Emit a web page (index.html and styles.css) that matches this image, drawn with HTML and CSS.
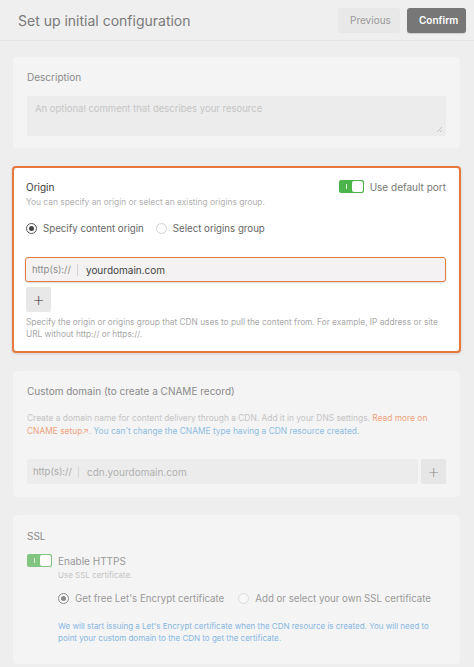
FILE: index.html
```html
<!DOCTYPE html>
<html lang="en">
<head>
<meta charset="utf-8">
<title>Set up initial configuration</title>
<link rel="stylesheet" href="styles.css">
</head>
<body>
<header class="topbar">
  <h1 class="title">Set up initial configuration</h1>
  <div class="actions">
    <button class="btn btn-prev">Previous</button>
    <button class="btn btn-confirm">Confirm</button>
  </div>
</header>
<main class="content">
  <section class="card dim desc-card">
    <div class="label">Description</div>
    <div class="textarea">
      <span class="placeholder">An optional comment that describes your resource</span>
      <svg class="grip" width="8" height="8" viewBox="0 0 8 8"><path d="M7 2 L2 7 M7 5 L5 7" stroke="#c4c4c4" stroke-width="1" fill="none"/></svg>
    </div>
  </section>

  <section class="card active origin-card">
    <div class="row-between">
      <div class="label dark">Origin</div>
      <div class="toggle-wrap">
        <span class="toggle on"><span class="knob"></span></span>
        <span class="toggle-label">Use default port</span>
      </div>
    </div>
    <div class="sub">You can specify an origin or select an existing origins group.</div>
    <div class="radios">
      <label class="radio"><span class="dot checked"></span>Specify content origin</label>
      <label class="radio"><span class="dot"></span>Select origins group</label>
    </div>
    <div class="field focus">
      <span class="prefix">http(s)://</span>
      <span class="value">yourdomain.com</span>
    </div>
    <button class="plus">+</button>
    <p class="help">Specify the origin or origins group that CDN uses to pull the content from. For example, IP address or site URL without http:// or https://.</p>
  </section>

  <section class="card dim domain-card">
    <div class="label">Custom domain (to create a CNAME record)</div>
    <p class="info">Create a domain name for content delivery through a CDN. Add it in your DNS settings. <span class="link">Read more on</span> <span class="link">CNAME setup&#8599;</span>. <span class="blue">You can't change the CNAME type having a CDN resource created.</span></p>
    <div class="field-row">
      <div class="field">
        <span class="prefix">http(s)://</span>
        <span class="value light">cdn.yourdomain.com</span>
      </div>
      <button class="plus small">+</button>
    </div>
  </section>

  <section class="card dim ssl-card">
    <div class="label">SSL</div>
    <div class="ssl-toggle">
      <span class="toggle on faded"><span class="knob"></span></span>
      <div class="ssl-body">
        <div class="ssl-title">Enable HTTPS</div>
        <div class="ssl-sub">Use SSL certificate.</div>
        <div class="radios ssl-radios">
          <label class="radio faded"><span class="dot checked"></span>Get free Let's Encrypt certificate</label>
          <label class="radio faded"><span class="dot"></span>Add or select your own SSL certificate</label>
        </div>
        <p class="blue-note">We will start issuing a Let's Encrypt certificate when the CDN resource is created. You will need to point your custom domain to the CDN to get the certificate.</p>
      </div>
    </div>
  </section>
</main>
</body>
</html>
```

FILE: styles.css
```css
* { box-sizing: border-box; }
html, body { margin: 0; padding: 0; }
body {
  background: #eeeeee;
  font-family: Inter, "Noto Sans", "Liberation Sans", sans-serif;
  color: #666;
  width: 474px;
  height: 667px;
  overflow: hidden;
}
.topbar {
  height: 41px;
  display: flex;
  align-items: center;
  justify-content: space-between;
  padding: 0 8px 0 18px;
  background: #efefef;
  border-bottom: 1px solid #e3e3e3;
}
.title {
  margin: 0;
  font-size: 14px;
  font-weight: 400;
  color: #7a7a7a;
}
.actions { display: flex; gap: 7px; }
.btn {
  font-family: inherit;
  font-size: 10px;
  height: 25px;
  border: none;
  border-radius: 3px;
  padding: 0 12px;
}
.btn-prev { background: #e8e8e8; color: #9a9a9a; width: 62px; }
.btn-confirm { background: #777777; color: #fff; font-weight: 600; width: 59px; box-shadow: 0 1px 1px rgba(0,0,0,0.15); }

.content {
  padding: 16px 14px 0 13px;
  display: flex;
  flex-direction: column;
  gap: 18px;
}
.card {
  border-radius: 4px;
  padding: 14px 14px;
}
.dim { background: #f4f4f4; }
.active {
  background: #ffffff;
  border: 2px solid #e8783a;
  margin: 0 -1px;
  padding: 12px 13px 11px 12px;
  box-shadow: 0 1px 3px rgba(0,0,0,0.12);
}
.label {
  font-size: 10px;
  color: #8a8a8a;
  line-height: 12px;
}
.label.dark { color: #3a3a3a; }

.desc-card { padding-top: 14px; padding-bottom: 12px; }
.textarea {
  position: relative;
  margin-top: 13px;
  height: 40px;
  background: #ececec;
  border-radius: 2px;
  padding: 7px 8px;
  font-size: 9.5px;
  line-height: 12px;
}
.placeholder { color: #c6c6c6; }
.grip { position: absolute; right: 3px; bottom: 3px; }

.row-between { display: flex; justify-content: space-between; align-items: center; }
.toggle-wrap { display: flex; align-items: center; gap: 6px; }
.toggle {
  position: relative;
  display: inline-block;
  width: 25px;
  height: 13px;
  border-radius: 2px;
  background: #4cb44a;
}
.toggle::before {
  content: "";
  position: absolute;
  left: 7px;
  top: 4px;
  width: 1px;
  height: 5px;
  background: rgba(255,255,255,0.8);
}
.toggle .knob {
  position: absolute;
  right: 1px;
  top: 1px;
  width: 11px;
  height: 11px;
  border-radius: 2px;
  background: #fff;
}
.toggle.faded { background: #82c581; }
.toggle-label { font-size: 10px; color: #777; }
.sub { font-size: 8.4px; color: #b0b0b0; margin-top: 4px; line-height: 11px; }
.radios { display: flex; gap: 12px; margin-top: 15px; }
.radio {
  display: flex;
  align-items: center;
  gap: 6px;
  font-size: 9.7px;
  color: #666;
}
.dot {
  width: 11px;
  height: 11px;
  border-radius: 50%;
  border: 1px solid #d2d2d2;
  background: #fff;
  position: relative;
}
.dot.checked { border-color: #555; }
.dot.checked::after {
  content: "";
  position: absolute;
  left: 2px; top: 2px;
  width: 5px; height: 5px;
  border-radius: 50%;
  background: #444;
}
.field {
  display: flex;
  align-items: center;
  height: 25px;
  background: #ececec;
  border-radius: 2px;
  font-size: 10px;
  flex: 1;
}
.field.focus {
  margin-top: 23px;
  margin-left: -1px;
  background: #f4f2f2;
  border: 1.5px solid #e57a3f;
  border-radius: 3px;
  box-shadow: 0 1px 2px rgba(0,0,0,0.15);
}
.prefix {
  color: #8a8a8a;
  padding: 0 6px 0 6px;
  border-right: 1px solid #d6d6d6;
  line-height: 12px;
  font-size: 9.5px;
}
.value { color: #444; padding-left: 8px; font-size: 10px; }
.value.light { color: #b0b0b0; }
.plus {
  display: flex;
  align-items: center;
  justify-content: center;
  width: 25px;
  height: 25px;
  margin-top: 5px;
  border: none;
  border-radius: 2px;
  background: #e8e8e8;
  color: #333;
  font-family: "DejaVu Sans", sans-serif;
  font-size: 14px;
  font-weight: 300;
  padding: 0;
}
.help {
  margin: 4px 0 0 0;
  font-size: 8.3px;
  line-height: 12px;
  color: #a8a8a8;
}
.domain-card { padding-top: 14px; padding-bottom: 13px; }
.info {
  margin: 15px 0 0 0;
  font-size: 8.4px;
  line-height: 13px;
  color: #c4c4c4;
}
.link { color: #f0a27c; }
.blue { color: #8fbde2; }
.field-row { display: flex; gap: 3px; margin-top: 21px; }
.field-row .plus { margin-top: 0; background: #e6e6e6; color: #888; }
.field-row .prefix { color: #aaa; }

.ssl-card { padding-top: 15px; padding-bottom: 20px; }
.ssl-toggle { display: flex; gap: 6px; margin-top: 12px; }
.ssl-toggle .toggle { margin-top: 0; flex: none; }
.ssl-title { font-size: 10px; color: #999; line-height: 14px; }
.ssl-sub { font-size: 8px; color: #c4c4c4; margin-top: 2px; }
.ssl-radios { margin-top: 13px; gap: 14px; }
.radio.faded { color: #9a9a9a; font-size: 9.7px; }
.radio.faded .dot { border-color: #dcdcdc; background: #f8f8f8; }
.radio.faded .dot.checked { border-color: #8a8a8a; }
.radio.faded .dot.checked::after { background: #8a8a8a; }
.blue-note {
  margin: 16px 0 0 0;
  font-size: 8px;
  line-height: 12px;
  color: #86b6e2;
}
```
